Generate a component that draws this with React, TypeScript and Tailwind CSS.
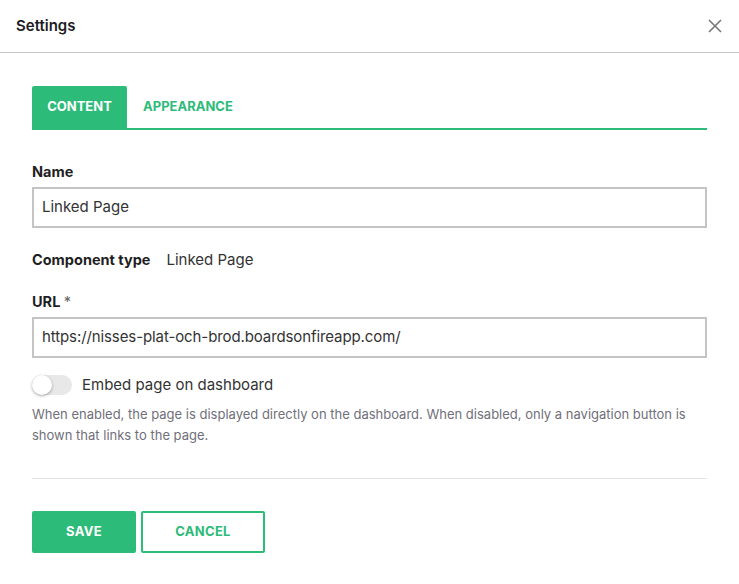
import React from "react";

export default function App() {
  return (
    <div className="w-[739px] h-[584px] bg-white text-[#1f1f1f]" style={{ fontFamily: "Inter, 'Liberation Sans', sans-serif" }}>
      <div className="h-[53px] flex items-center justify-between pl-4 pr-4 border-b border-[#c4c4c4]">
        <h2 className="text-[15px] font-semibold text-[#1c1c24]">Settings</h2>
        <svg width="16" height="16" viewBox="0 0 16 16" className="text-[#777]">
          <path d="M2 2 L14 14 M14 2 L2 14" stroke="currentColor" strokeWidth="1.6" />
        </svg>
      </div>
      <div className="px-8 pt-[33px]">
        <div className="flex border-b-2 border-[#2dbb79] h-[44px]">
          <div className="w-[95px] h-[42px] bg-[#2dbb79] rounded-t-[2px] flex items-center justify-center text-white text-[13px] font-bold">CONTENT</div>
          <div className="px-4 h-[42px] flex items-center text-[#2dbb79] text-[13px] font-bold">APPEARANCE</div>
        </div>
        <div className="mt-[33px] text-[14.5px] font-bold leading-[17px]">Name</div>
        <div className="mt-[7px] h-[41px] border-2 border-[#c4c4c4] flex items-center px-[8px] text-[15px] text-[#333]">Linked Page</div>
        <div className="mt-[23px] flex items-center text-[15px] leading-[18px]">
          <span className="font-bold text-[14.5px]">Component type</span>
          <span className="ml-4 text-[#333]">Linked Page</span>
        </div>
        <div className="mt-[24px] text-[14.5px] font-bold leading-[17px]">URL <span className="font-normal text-[#666]">*</span></div>
        <div className="mt-[7px] h-[41px] border-2 border-[#c4c4c4] flex items-center px-[8px] text-[15px] tracking-[-0.1px] text-[#333]">https://nisses-plat-och-brod.boardsonfireapp.com/</div>
        <div className="mt-[16px] flex items-center">
          <div className="w-[40px] h-[20px] rounded-full bg-[#e8e8e8] relative">
            <div className="absolute left-0 top-0 w-[20px] h-[20px] rounded-full bg-white shadow-[0_1px_3px_rgba(0,0,0,0.35)]"></div>
          </div>
          <span className="ml-[10px] text-[15px] text-[#333]">Embed page on dashboard</span>
        </div>
        <p className="mt-[7px] text-[13px] leading-[21px] text-[#70707a]">When enabled, the page is displayed directly on the dashboard. When disabled, only a navigation button is shown that links to the page.</p>
        <div className="mt-[32px] border-t border-[#e4e4e4]"></div>
        <div className="mt-[32px] flex gap-[5px]">
          <button className="w-[104px] h-[42px] bg-[#2dbb79] rounded-[2px] text-white text-[13px] font-bold tracking-[0.3px]">SAVE</button>
          <button className="w-[124px] h-[42px] border-2 border-[#2dbb79] rounded-[2px] text-[#2dbb79] text-[13px] font-bold tracking-[0.3px]">CANCEL</button>
        </div>
      </div>
    </div>
  );
}
